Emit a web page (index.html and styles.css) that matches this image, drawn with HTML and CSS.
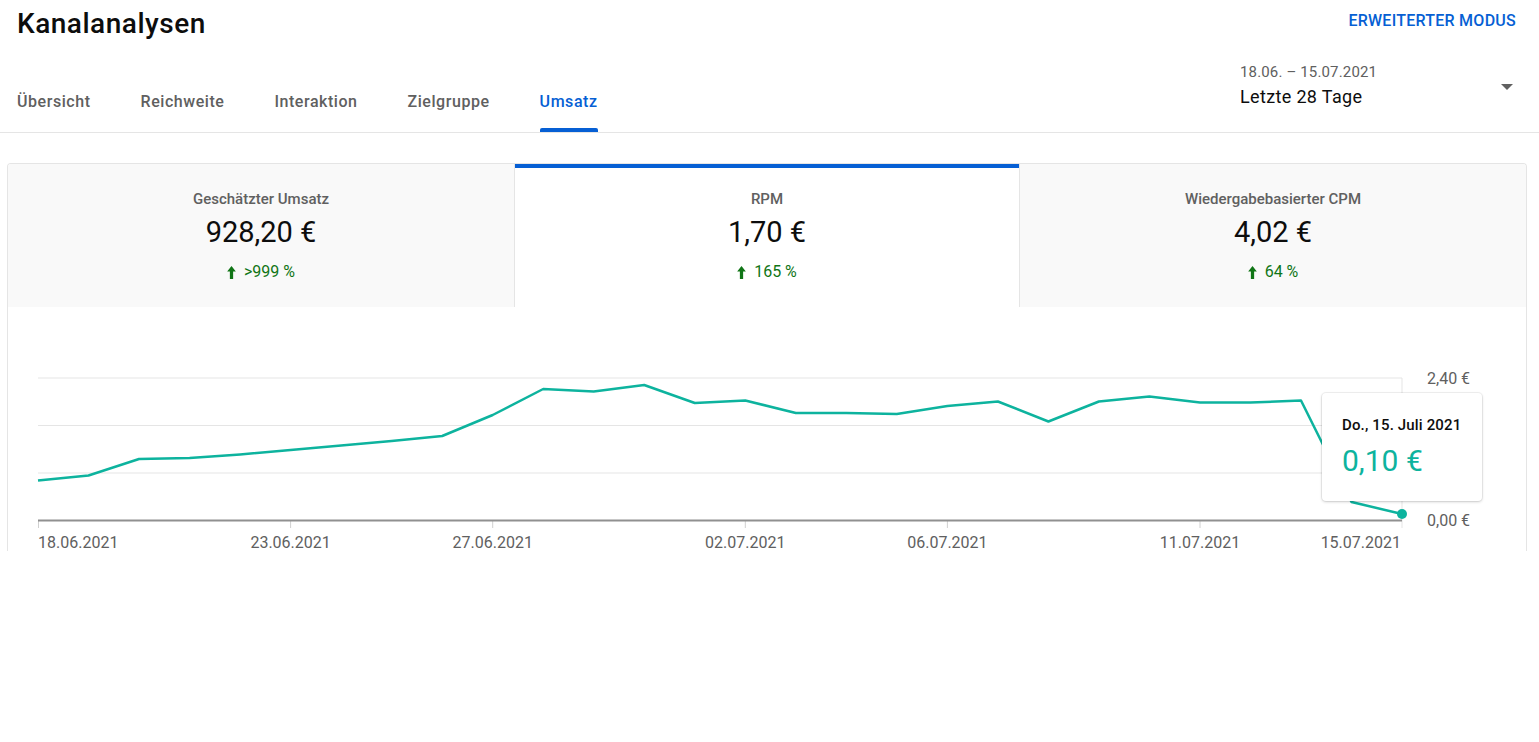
FILE: index.html
```html
<!DOCTYPE html>
<html lang="de">
<head>
<meta charset="utf-8">
<title>Kanalanalysen</title>
<link rel="stylesheet" href="styles.css">
</head>
<body>
<header class="topbar">
  <h1 class="title">Kanalanalysen</h1>
  <a class="advanced">Erweiterter Modus</a>
</header>
<nav class="nav">
  <div class="tabs">
    <div class="tab"><span>Übersicht</span><i class="bar"></i></div>
    <div class="tab"><span>Reichweite</span><i class="bar"></i></div>
    <div class="tab"><span>Interaktion</span><i class="bar"></i></div>
    <div class="tab"><span>Zielgruppe</span><i class="bar"></i></div>
    <div class="tab active"><span>Umsatz</span><i class="bar"></i></div>
  </div>
  <div class="picker">
    <div class="picker-text">
      <div class="range">18.06. – 15.07.2021</div>
      <div class="period">Letzte 28 Tage</div>
    </div>
    <span class="caret"></span>
  </div>
</nav>
<section class="card">
  <div class="metrics">
    <div class="metric">
      <div class="label">Geschätzter Umsatz</div>
      <div class="value">928,20 €</div>
      <div class="change"><svg class="arrow" viewBox="0 0 8 12" width="9" height="13"><path d="M4 0L8 5H5.5V12H2.5V5H0Z"/></svg><span>&gt;999 %</span></div>
    </div>
    <div class="metric active">
      <div class="label">RPM</div>
      <div class="value">1,70 €</div>
      <div class="change"><svg class="arrow" viewBox="0 0 8 12" width="9" height="13"><path d="M4 0L8 5H5.5V12H2.5V5H0Z"/></svg><span>165 %</span></div>
    </div>
    <div class="metric">
      <div class="label">Wiedergabebasierter CPM</div>
      <div class="value">4,02 €</div>
      <div class="change"><svg class="arrow" viewBox="0 0 8 12" width="9" height="13"><path d="M4 0L8 5H5.5V12H2.5V5H0Z"/></svg><span>64 %</span></div>
    </div>
  </div>
  <div class="chart">
    <svg class="plot" width="1518" height="244" viewBox="0 0 1518 244">
      <g class="grid">
        <line x1="30" y1="71" x2="1394" y2="71"/>
        <line x1="30" y1="118.5" x2="1394" y2="118.5"/>
        <line x1="30" y1="166" x2="1394" y2="166"/>
        <line x1="1394" y1="71" x2="1394" y2="221"/>
      </g>
      <g class="ticks">
        <line x1="30.5" y1="213" x2="30.5" y2="221"/>
        <line x1="282.6" y1="213" x2="282.6" y2="221"/>
        <line x1="484.7" y1="213" x2="484.7" y2="221"/>
        <line x1="737.3" y1="213" x2="737.3" y2="221"/>
        <line x1="939.4" y1="213" x2="939.4" y2="221"/>
        <line x1="1192" y1="213" x2="1192" y2="221"/>
      </g>
      <line class="axis" x1="30" y1="213.5" x2="1394" y2="213.5"/>
      <polyline class="series" points="30,173.5 80.5,168.5 131,152 181.6,151 232.1,147.5 282.6,143 333.1,138.5 383.6,134 434.2,129 484.7,108 535.2,82 585.7,84.5 636.2,78 686.8,96 737.3,93.5 787.8,106 838.3,106 888.8,107 939.4,99 989.9,94.5 1040.4,114.5 1090.9,94.5 1141.4,89.5 1192,95.5 1242.5,95.5 1293,93.5 1343.5,195 1394,207"/>
      <circle class="dot" cx="1394" cy="207" r="5"/>
      <g class="ylabels">
        <text x="1419" y="76.5">2,40 €</text>
        <text x="1419" y="219">0,00 €</text>
      </g>
      <g class="xlabels">
        <text x="30" y="241" text-anchor="start">18.06.2021</text>
        <text x="282.6" y="241" text-anchor="middle">23.06.2021</text>
        <text x="484.7" y="241" text-anchor="middle">27.06.2021</text>
        <text x="737.3" y="241" text-anchor="middle">02.07.2021</text>
        <text x="939.4" y="241" text-anchor="middle">06.07.2021</text>
        <text x="1192" y="241" text-anchor="middle">11.07.2021</text>
        <text x="1393" y="241" text-anchor="end">15.07.2021</text>
      </g>
    </svg>
    <div class="tooltip">
      <div class="tt-date">Do., 15. Juli 2021</div>
      <div class="tt-value">0,10 €</div>
    </div>
  </div>
</section>
</body>
</html>
```
FILE: styles.css
```css
body {
  margin: 0;
  font-family: Roboto, "Liberation Sans", Arial, sans-serif;
  background: #fff;
  color: #0d0d0d;
}

.topbar {
  display: flex;
  justify-content: space-between;
  align-items: flex-start;
  height: 48px;
  padding: 0 23px 0 17px;
}

.title {
  margin: 0;
  font-size: 28px;
  font-weight: 500;
  line-height: 48px;
  letter-spacing: 0.5px;
  color: #0d0d0d;
}

.advanced {
  font-size: 16px;
  font-weight: 500;
  line-height: 42px;
  letter-spacing: 0.25px;
  text-transform: uppercase;
  color: #065fd4;
  cursor: pointer;
}

.nav {
  display: flex;
  justify-content: space-between;
  height: 84px;
  padding: 0 23px 0 17px;
  border-bottom: 1px solid #e5e5e5;
}

.tabs {
  display: flex;
  gap: 50px;
  align-self: flex-end;
}

.tab {
  display: flex;
  flex-direction: column;
  height: 48px;
  padding-top: 8px;
  box-sizing: border-box;
  font-size: 16px;
  font-weight: 500;
  line-height: 20px;
  letter-spacing: 0.55px;
  color: #606060;
}

.tab .bar {
  display: block;
  margin-top: auto;
  height: 4px;
  border-radius: 2px 2px 0 0;
}

.tab.active {
  color: #065fd4;
}

.tab.active .bar {
  background: #065fd4;
}

.picker {
  display: flex;
  align-items: center;
  justify-content: space-between;
  width: 276px;
  margin-top: 14px;
  align-self: flex-start;
}

.range {
  font-size: 15px;
  line-height: 20px;
  letter-spacing: 0.15px;
  color: #606060;
}

.period {
  margin-top: 3px;
  font-size: 18px;
  line-height: 24px;
  letter-spacing: 0.35px;
  color: #0d0d0d;
}

.caret {
  width: 0;
  height: 0;
  margin: 2px 3px 0 0;
  border-left: 6px solid transparent;
  border-right: 6px solid transparent;
  border-top: 6px solid #606060;
}

.card {
  margin: 30px 12px 0 7px;
  border: 1px solid #e5e5e5;
  border-bottom: none;
  border-radius: 4px 4px 0 0;
  overflow: hidden;
}

.metrics {
  display: grid;
  grid-template-columns: repeat(3, 1fr);
  height: 143px;
}

.metric {
  box-sizing: border-box;
  padding-top: 25px;
  background: #f9f9f9;
  text-align: center;
}

.metric.active {
  background: #fff;
  box-shadow: inset 0 4px 0 #065fd4;
  border-left: 1px solid #e5e5e5;
  border-right: 1px solid #e5e5e5;
}

.label {
  font-size: 15px;
  font-weight: 500;
  line-height: 20px;
  color: #606060;
}

.value {
  margin-top: 3px;
  font-size: 29px;
  line-height: 40px;
  color: #0d0d0d;
}

.change {
  display: flex;
  justify-content: center;
  align-items: center;
  gap: 8px;
  margin-top: 10px;
  font-size: 16px;
  line-height: 20px;
  color: #107516;
}

.arrow {
  fill: #107516;
}

.chart {
  position: relative;
  height: 244px;
}

.plot {
  display: block;
}

.grid line {
  stroke: #e5e5e5;
  stroke-width: 1;
}

.ticks line {
  stroke: #d0d0d0;
  stroke-width: 1;
}

.axis {
  stroke: #909090;
  stroke-width: 2;
}

.series {
  fill: none;
  stroke: #0db39e;
  stroke-width: 2.5;
  stroke-linejoin: round;
}

.dot {
  fill: #0db39e;
}

.ylabels text,
.xlabels text {
  font-family: Roboto, "Liberation Sans", Arial, sans-serif;
  font-size: 16px;
  fill: #606060;
}

.tooltip {
  position: absolute;
  left: 1314px;
  top: 86px;
  width: 160px;
  height: 108px;
  box-sizing: border-box;
  padding: 22px 20px 0;
  background: #fff;
  border-radius: 4px;
  box-shadow: 0 1px 3px rgba(0, 0, 0, 0.18), 0 0 0 1px rgba(0, 0, 0, 0.05);
}

.tt-date {
  font-size: 15px;
  font-weight: 500;
  line-height: 20px;
  letter-spacing: 0.15px;
  color: #0d0d0d;
}

.tt-value {
  margin-top: 8px;
  font-size: 30px;
  line-height: 36px;
  color: #0db39e;
}
```
